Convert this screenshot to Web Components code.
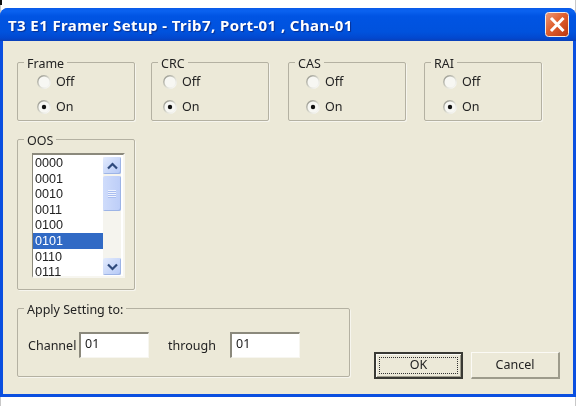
<!DOCTYPE html>
<html>
<head>
<meta charset="utf-8">
<title>T3 E1 Framer Setup</title>
<style>
  html, body { margin: 0; height: 406px; overflow: hidden; }
  body {
    background:
      linear-gradient(#111, #111) 0 0 / 2px 5px no-repeat,
      linear-gradient(#c8c8c8, #c8c8c8) 0 0 / 1px 100% no-repeat,
      linear-gradient(#c8c8c8, #c8c8c8) 575px 0 / 1px 100% no-repeat,
      #fff;
    font: 12.5px "Noto Sans", "Liberation Sans", sans-serif;
    color: #222;
    padding-top: 8px;
    box-sizing: border-box;
  }
  .row { display: flex; }
  .bottom { display: flex; align-items: flex-end; }
  .fields { display: flex; align-items: center; }
</style>
</head>
<body>

<x-dialog caption="T3 E1 Framer Setup - Trib7, Port-01 , Chan-01">
  <div class="row" style="margin-bottom:18px">
    <x-group label="Frame" style="--indent:19px">
      <x-radio>Off</x-radio>
      <x-radio checked>On</x-radio>
    </x-group>
    <x-group label="CRC" style="--indent:11px;margin-left:16px">
      <x-radio>Off</x-radio>
      <x-radio checked>On</x-radio>
    </x-group>
    <x-group label="CAS" style="--indent:17px;margin-left:19px">
      <x-radio>Off</x-radio>
      <x-radio checked>On</x-radio>
    </x-group>
    <x-group label="RAI" style="--indent:18px;margin-left:18px">
      <x-radio>Off</x-radio>
      <x-radio checked>On</x-radio>
    </x-group>
  </div>

  <x-group label="OOS" style="--pad:13px 10px 12px 14px;--h:151px;margin-bottom:18px">
    <x-listbox selected="5">
      <span>0000</span><span>0001</span><span>0010</span><span>0011</span>
      <span>0100</span><span>0101</span><span>0110</span><span>0111</span>
    </x-listbox>
  </x-group>

  <div class="bottom">
    <x-group label="Apply Setting to:" style="--w:333px;--h:69px;--pad:23px 0 0 10px;margin-bottom:2px">
      <div class="fields">
        <span style="width:51px">Channel</span>
        <x-field>01</x-field>
        <span style="width:81px;padding-left:19px;box-sizing:border-box">through</span>
        <x-field>01</x-field>
      </div>
    </x-group>
    <x-button default style="margin-left:24px">OK</x-button>
    <x-button style="margin-left:8px">Cancel</x-button>
  </div>
</x-dialog>

<script>
// dialog frame with the blue title bar
class XDialog extends HTMLElement {
  connectedCallback() {
    const root = this.attachShadow({ mode: 'open' });
    root.innerHTML = `
      <style>
        :host { display: block; width: 576px; height: 389px; filter: blur(0.3px); }
        .frame {
          display: flex; flex-direction: column; height: 100%; box-sizing: border-box;
          border-radius: 8px 8px 0 0; overflow: hidden;
          background: #0a4fe0;
        }
        .bar {
          flex: none; height: 33px; box-sizing: border-box; padding: 0 7px 0 8px;
          display: flex; align-items: center; justify-content: space-between;
          background: linear-gradient(#0a5ae8 0, #0a62f0 3px, #0054e3 8px, #0052dd 24px, #0248cf 30px, #0a3fb8 33px);
          color: #fff;
          font: bold 15px "Noto Sans", "Liberation Sans", sans-serif;
          letter-spacing: 0.4px;
          text-shadow: 1px 1px 1px #0a2f90;
          white-space: nowrap;
        }
        .close { display: block; }
        .body {
          flex: 1; min-height: 0; margin: 0 3px 3px; padding: 21px 14px 0;
          background: #ece9d8;
        }
      </style>
      <div class="frame">
        <div class="bar">
          <span>${this.getAttribute('caption')}</span>
          <svg class="close" width="24" height="25" viewBox="0 0 24 25">
            <defs>
              <linearGradient id="red" x1="0" y1="0" x2="1" y2="1">
                <stop offset="0" stop-color="#eb9c7e"/>
                <stop offset="0.45" stop-color="#e0602f"/>
                <stop offset="1" stop-color="#b8340f"/>
              </linearGradient>
            </defs>
            <rect x="0.5" y="0.5" width="23" height="24" rx="3" fill="url(#red)" stroke="#f4ece6"/>
            <path d="M7 7l10.5 11M17.5 7l-10.5 11" stroke="#fff" stroke-width="3" stroke-linecap="square"/>
          </svg>
        </div>
        <div class="body"><slot></slot></div>
      </div>`;
  }
}

// group box, the label sits over its top border
class XGroup extends HTMLElement {
  connectedCallback() {
    const root = this.attachShadow({ mode: 'open' });
    root.innerHTML = `
      <style>
        :host { display: block; position: relative; box-sizing: border-box; flex: none;
          width: var(--w, 118px); height: var(--h, 59px);
          border: 1px solid #b4b1a2; border-radius: 2px;
          box-shadow: 1px 1px 0 #f6f5ee;
          padding: var(--pad, 6px 0 0 var(--indent, 19px)); }
        .label { position: absolute; left: 6px; top: -8px; padding: 0 3px;
          background: #ece9d8; line-height: 17px; }
      </style>
      <span class="label">${this.getAttribute('label')}</span>
      <slot></slot>`;
  }
}

class XRadio extends HTMLElement {
  connectedCallback() {
    const root = this.attachShadow({ mode: 'open' });
    const dot = this.hasAttribute('checked') ? '<circle cx="7" cy="7" r="2.2" fill="#111"/>' : '';
    root.innerHTML = `
      <style>
        :host { display: flex; align-items: center; height: 25px; }
        svg { margin-right: 5px; flex: none; }
      </style>
      <svg width="14" height="14" viewBox="0 0 14 14">
        <defs>
          <linearGradient id="rim" x1="0" y1="0" x2="1" y2="1">
            <stop offset="0" stop-color="#8f8f86"/>
            <stop offset="0.55" stop-color="#dcdcd2"/>
            <stop offset="1" stop-color="#fff"/>
          </linearGradient>
        </defs>
        <circle cx="7" cy="7" r="6.2" fill="#f7f7f3" stroke="url(#rim)" stroke-width="1.4"/>
        ${dot}
      </svg>
      <slot></slot>`;
  }
}

class XListbox extends HTMLElement {
  connectedCallback() {
    const root = this.attachShadow({ mode: 'open' });
    root.innerHTML = `
      <style>
        :host { display: flex; box-sizing: border-box; width: 93px; height: 125px; overflow: hidden;
          background: #fff; border-style: solid; border-width: 2px 2px 2px 1px;
          border-color: #8b897c #f7f6f0 #f7f6f0 #8b897c;
          font-family: "Liberation Sans", sans-serif; font-size: 12.6px; }
        .items { flex: 1; min-width: 0; height: 121px; overflow: hidden; }
        ::slotted(span) { display: block; box-sizing: border-box; height: 15.6px; padding: 2px 0 0 2px; line-height: 13.6px; }
        ::slotted(.sel) { background: #316ac5; color: #fff; }
        .track { flex: none; width: 18px; margin: 2px 2px 0 0; height: 118px; background: #f5f4ee;
          display: flex; flex-direction: column; align-items: stretch; }
        .btn { height: 17px; border-radius: 2px; display: flex; align-items: center; justify-content: center;
          background: linear-gradient(135deg, #e3ebfd, #b4c8f6); box-shadow: inset -1px -1px 0 #9db4e6; }
        .thumb { height: 35px; margin-top: 2px; border-radius: 2px; display: flex; align-items: center; justify-content: center;
          background: linear-gradient(90deg, #cfdcfb, #bccdf8); box-shadow: inset -1px -1px 0 #9db4e6; }
        .gap { flex: 1; }
      </style>
      <div class="items"><slot></slot></div>
      <div class="track">
        <div class="btn"><svg width="11" height="8" viewBox="0 0 11 8"><path d="M1 6.5l4.5-4.5 4.5 4.5" fill="none" stroke="#2f4a7c" stroke-width="2.2"/></svg></div>
        <div class="thumb"><svg width="8" height="8" viewBox="0 0 8 8"><path d="M0 .5h8M0 2.5h8M0 4.5h8M0 6.5h8" stroke="#eef3fe"/><path d="M0 1.5h8M0 3.5h8M0 5.5h8M0 7.5h8" stroke="#a9bdf0"/></svg></div>
        <div class="gap"></div>
        <div class="btn"><svg width="11" height="8" viewBox="0 0 11 8"><path d="M1 1.5l4.5 4.5 4.5-4.5" fill="none" stroke="#2f4a7c" stroke-width="2.2"/></svg></div>
      </div>`;
    const items = this.querySelectorAll('span');
    const picked = items[+this.getAttribute('selected')];
    if (picked) picked.className = 'sel';
  }
}

class XField extends HTMLElement {
  connectedCallback() {
    const root = this.attachShadow({ mode: 'open' });
    root.innerHTML = `
      <style>
        :host { display: block; box-sizing: border-box; width: 70px; height: 26px; flex: none;
          background: #fff; padding: 1px 0 0 4px; line-height: 18px;
          border-style: solid; border-width: 2px 1px 1px 2px;
          border-color: #8b897c #f7f6f0 #f7f6f0 #8b897c; }
      </style>
      <slot></slot>`;
  }
}

class XButton extends HTMLElement {
  connectedCallback() {
    const root = this.attachShadow({ mode: 'open' });
    const isDefault = this.hasAttribute('default');
    root.innerHTML = `
      <style>
        :host { display: flex; align-items: center; justify-content: center; flex: none; box-sizing: border-box;
          width: 89px; height: 27px; position: relative; background: #ece9d8; padding-bottom: 2px;
          border-style: solid; border-width: ${isDefault ? '2px' : '1px 2px 2px 1px'};
          border-color: ${isDefault ? '#3a3a34' : '#fbfaf5 #9d9b8b #9d9b8b #fbfaf5'};
          ${isDefault ? 'box-shadow: inset 1px 1px 0 #fbfaf5, inset -1px -1px 0 #a09e8e;' : ''} }
        .focus { position: absolute; inset: 3px; border: 1px dotted #333; }
      </style>
      ${isDefault ? '<div class="focus"></div>' : ''}
      <slot></slot>`;
  }
}

customElements.define('x-dialog', XDialog);
customElements.define('x-group', XGroup);
customElements.define('x-radio', XRadio);
customElements.define('x-listbox', XListbox);
customElements.define('x-field', XField);
customElements.define('x-button', XButton);
</script>
</body>
</html>
